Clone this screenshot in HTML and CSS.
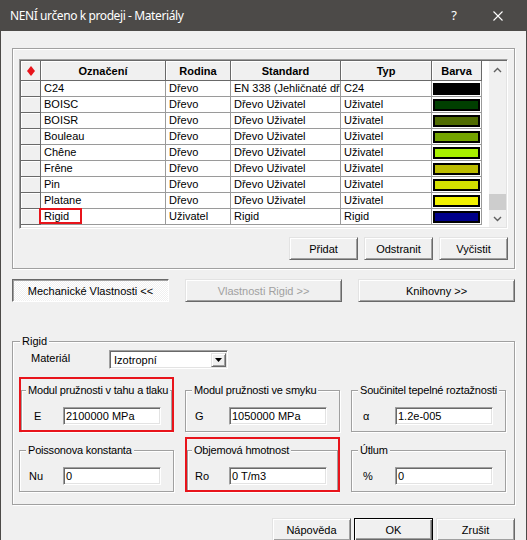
FILE: index.html
```html
<!DOCTYPE html>
<html lang="cs">
<head>
<meta charset="utf-8">
<title>Materiály</title>
<link rel="stylesheet" href="styles.css">
</head>
<body>
<div class="window">
  <div class="titlebar">
    <span class="title">NENÍ určeno k prodeji - Materiály</span>
    <span class="help">?</span>
    <svg class="close" width="10" height="10" viewBox="0 0 10 10"><path d="M0.5 0.5L9.5 9.5M9.5 0.5L0.5 9.5" stroke="#ffffff" stroke-width="1.1" fill="none"/></svg>
  </div>
  <div class="content">
    <div class="group library">
      <div class="grid-frame">
        <table class="grid">
          <colgroup>
            <col class="c-hdr"><col class="c-name"><col class="c-fam"><col class="c-std"><col class="c-typ"><col class="c-col">
          </colgroup>
          <thead>
            <tr>
              <th class="rh"><svg class="diamond" width="8" height="10" viewBox="0 0 8 10"><polygon points="4,0 8,5 4,10 0,5" fill="#e8141b"/></svg></th>
              <th>Označení</th><th>Rodina</th><th>Standard</th><th>Typ</th><th>Barva</th>
            </tr>
          </thead>
          <tbody>
            <tr><td class="rh"></td><td>C24</td><td>Dřevo</td><td>EN 338 (Jehličnaté dřevo)</td><td>C24</td><td class="sw"><span class="swatch" style="background:#000000"></span></td></tr>
            <tr><td class="rh"></td><td>BOISC</td><td>Dřevo</td><td>Dřevo Uživatel</td><td>Uživatel</td><td class="sw"><span class="swatch" style="background:#003f00"></span></td></tr>
            <tr><td class="rh"></td><td>BOISR</td><td>Dřevo</td><td>Dřevo Uživatel</td><td>Uživatel</td><td class="sw"><span class="swatch" style="background:#4f6b00"></span></td></tr>
            <tr><td class="rh"></td><td>Bouleau</td><td>Dřevo</td><td>Dřevo Uživatel</td><td>Uživatel</td><td class="sw"><span class="swatch" style="background:#74a400"></span></td></tr>
            <tr><td class="rh"></td><td>Chêne</td><td>Dřevo</td><td>Dřevo Uživatel</td><td>Uživatel</td><td class="sw"><span class="swatch" style="background:#a8f000"></span></td></tr>
            <tr><td class="rh"></td><td>Frêne</td><td>Dřevo</td><td>Dřevo Uživatel</td><td>Uživatel</td><td class="sw"><span class="swatch" style="background:#bcbc00"></span></td></tr>
            <tr><td class="rh"></td><td>Pin</td><td>Dřevo</td><td>Dřevo Uživatel</td><td>Uživatel</td><td class="sw"><span class="swatch" style="background:#d4e000"></span></td></tr>
            <tr><td class="rh"></td><td>Platane</td><td>Dřevo</td><td>Dřevo Uživatel</td><td>Uživatel</td><td class="sw"><span class="swatch" style="background:#f2f200"></span></td></tr>
            <tr><td class="rh"></td><td class="marked">Rigid<span class="mark"></span></td><td>Uživatel</td><td>Rigid</td><td>Rigid</td><td class="sw"><span class="swatch" style="background:#00008a"></span></td></tr>
          </tbody>
        </table>
        <div class="scrollbar">
          <div class="sb-arrow"><svg width="9" height="6" viewBox="0 0 9 6"><polyline points="1,5 4.5,1.5 8,5" fill="none" stroke="#606060" stroke-width="1.4"/></svg></div>
          <div class="sb-track"><div class="sb-thumb"></div></div>
          <div class="sb-arrow"><svg width="9" height="6" viewBox="0 0 9 6"><polyline points="1,1 4.5,4.5 8,1" fill="none" stroke="#606060" stroke-width="1.4"/></svg></div>
        </div>
      </div>
      <div class="actions">
        <button class="btn act">Přidat</button>
        <button class="btn act">Odstranit</button>
        <button class="btn act">Vyčistit</button>
      </div>
    </div>

    <div class="tabs">
      <button class="btn tab pressed">Mechanické Vlastnosti &lt;&lt;</button>
      <button class="btn tab disabled">Vlastnosti Rigid &gt;&gt;</button>
      <button class="btn tab">Knihovny &gt;&gt;</button>
    </div>

    <fieldset class="rigid">
      <legend>Rigid</legend>
      <div class="mat-row">
        <span class="mat-label">Materiál</span>
        <div class="combo">
          <span class="combo-text">Izotropní</span>
          <span class="combo-btn"><svg width="7" height="4" viewBox="0 0 7 4"><polygon points="0,0 7,0 3.5,4" fill="#000"/></svg></span>
        </div>
      </div>
      <div class="props">
        <div class="prop hl">
          <fieldset class="pf"><legend>Modul pružnosti v tahu a tlaku</legend>
            <div class="pf-row"><span class="pf-label e">E</span><span class="inp">2100000 MPa</span></div>
          </fieldset>
        </div>
        <div class="prop">
          <fieldset class="pf"><legend>Modul pružnosti ve smyku</legend>
            <div class="pf-row"><span class="pf-label">G</span><span class="inp">1050000 MPa</span></div>
          </fieldset>
        </div>
        <div class="prop">
          <fieldset class="pf"><legend>Součinitel tepelné roztažnosti</legend>
            <div class="pf-row"><span class="pf-label a">α</span><span class="inp">1.2e-005</span></div>
          </fieldset>
        </div>
        <div class="prop">
          <fieldset class="pf"><legend>Poissonova konstanta</legend>
            <div class="pf-row"><span class="pf-label">Nu</span><span class="inp">0</span></div>
          </fieldset>
        </div>
        <div class="prop hl">
          <fieldset class="pf"><legend>Objemová hmotnost</legend>
            <div class="pf-row"><span class="pf-label">Ro</span><span class="inp">0 T/m3</span></div>
          </fieldset>
        </div>
        <div class="prop">
          <fieldset class="pf"><legend>Útlum</legend>
            <div class="pf-row"><span class="pf-label a">%</span><span class="inp">0</span></div>
          </fieldset>
        </div>
      </div>
    </fieldset>

    <div class="dialog-buttons">
      <button class="btn dlg">Nápověda</button>
      <button class="btn dlg default">OK</button>
      <button class="btn dlg">Zrušit</button>
    </div>
  </div>
</div>
</body>
</html>
```

FILE: styles.css
```css
* { box-sizing: border-box; }
html, body { margin: 0; padding: 0; }
body {
  width: 527px;
  height: 540px;
  overflow: hidden;
  background: #f0f0f0;
  font-family: "Liberation Sans", Arial, sans-serif;
  font-size: 11px;
  color: #000;
}

.window {
  width: 527px;
  height: 540px;
  border-left: 1px solid #4c4a48;
  border-right: 1px solid #4c4a48;
  background: #f0f0f0;
  overflow: hidden;
}

/* title bar */
.titlebar {
  height: 31px;
  background: #4c4a48;
  color: #ffffff;
  display: flex;
  align-items: center;
  padding: 0 23px 0 9px;
  font-family: "Noto Sans", "Open Sans", sans-serif;
  font-size: 12px;
}
.title { flex: 1; padding-bottom: 1px; letter-spacing: -0.4px; }
.help { font-size: 13px; margin-right: 36px; padding-bottom: 1px; }
.close { display: block; }

.content { padding: 17px 0 0 11px; }

/* generic etched group */
.group {
  width: 503px;
  border: 1px solid #a0a0a0;
  box-shadow: inset 1px 1px 0 #ffffff, 1px 1px 0 #ffffff;
}
.library { padding: 10px 6px 8px; }

/* grid */
.grid-frame {
  height: 170px;
  display: flex;
  justify-content: space-between;
  background: #ffffff;
  border: 1px solid;
  border-color: #a0a0a0 #ffffff #ffffff #a0a0a0;
  box-shadow: inset 1px 1px 0 #696969, inset -1px -1px 0 #e3e3e3;
  padding: 1px;
}
.grid {
  table-layout: fixed;
  width: 461px;
  border-collapse: separate;
  border-spacing: 0;
  align-self: flex-start;
}
.c-hdr { width: 20px; }
.c-name { width: 125px; }
.c-fam { width: 65px; }
.c-std { width: 110px; }
.c-typ { width: 91px; }
.c-col { width: 50px; }

.grid th {
  height: 20px;
  padding: 0;
  background: #f0f0f0;
  font-weight: bold;
  text-align: center;
  border-right: 1px solid #696969;
  border-bottom: 1px solid #696969;
  box-shadow: inset 1px 1px 0 #ffffff;
  line-height: 18px;
  white-space: nowrap;
  overflow: hidden;
}
.grid td {
  height: 16px;
  padding: 0 0 0 3px;
  line-height: 15px;
  border-right: 1px solid #9a9a9a;
  border-bottom: 1px solid #9a9a9a;
  white-space: nowrap;
  overflow: hidden;
  text-overflow: clip;
}
.grid td.rh, .grid th.rh {
  background: #f0f0f0;
  padding: 0;
  border-right: 1px solid #696969;
  border-bottom: 1px solid #696969;
  box-shadow: inset 1px 1px 0 #ffffff;
}
.diamond { display: block; margin: 0 auto; }
.grid td.sw { padding: 0; }
.swatch {
  display: block;
  width: 47px;
  height: 12px;
  margin: 1px 0 0 1px;
  border: 2px solid #000000;
}
.grid td.marked { position: relative; overflow: visible; }
.mark {
  position: absolute;
  left: -2px;
  top: -1px;
  width: 43px;
  bottom: 0;
  border: 2px solid #e8141b;
}

.scrollbar {
  width: 17px;
  background: #f0f0f0;
  display: flex;
  flex-direction: column;
}
.sb-arrow {
  height: 17px;
  display: flex;
  align-items: center;
  justify-content: center;
}
.sb-track {
  flex: 1;
  display: flex;
  flex-direction: column;
  justify-content: flex-end;
}
.sb-thumb { height: 16px; background: #cdcdcd; }

/* buttons */
.btn {
  appearance: none;
  margin: 0;
  padding: 0;
  font: inherit;
  color: #000;
  height: 23px;
  background: #f0f0f0;
  border: 1px solid;
  border-color: #e3e3e3 #696969 #696969 #e3e3e3;
  box-shadow: inset 1px 1px 0 #ffffff, inset -1px -1px 0 #a0a0a0;
  text-align: center;
  white-space: nowrap;
}
.actions {
  display: flex;
  justify-content: flex-end;
  gap: 6px;
  margin-top: 8px;
}
.act { width: 69px; }

.tabs {
  width: 503px;
  display: flex;
  justify-content: space-between;
  margin-top: 10px;
}
.tab { width: 157px; }
.tab.pressed {
  border-color: #696969 #ffffff #ffffff #696969;
  box-shadow: inset 1px 1px 0 #a0a0a0;
  background-color: #f0f0f0;
  background-image: conic-gradient(#ffffff 25%, #f0f0f0 0 50%, #ffffff 0 75%, #f0f0f0 0);
  background-size: 2px 2px;
}
.tab.disabled { color: #a0a0a0; }

/* Rigid section */
fieldset {
  margin: 0;
  min-width: 0;
  border: 1px solid #a0a0a0;
  box-shadow: inset 1px 1px 0 #ffffff, 1px 1px 0 #ffffff;
}
legend {
  padding: 0 2px;
  line-height: 14px;
  background: #f0f0f0;
  white-space: nowrap;
}
.rigid {
  width: 503px;
  margin-top: 32px;
  padding: 2px 6px 12px;
}
.rigid > legend { margin-left: 1px; }

.mat-row {
  display: flex;
  align-items: center;
  height: 19px;
}
.mat-label { width: 90px; padding-left: 12px; padding-bottom: 3px; }
.combo {
  display: flex;
  width: 119px;
  height: 19px;
  background: #ffffff;
  border: 1px solid;
  border-color: #a0a0a0 #ffffff #ffffff #a0a0a0;
  box-shadow: inset 1px 1px 0 #696969, inset -1px -1px 0 #e3e3e3;
  padding: 2px 1px 1px 2px;
}
.combo-text { flex: 1; line-height: 14px; padding-left: 2px; }
.combo-btn {
  width: 15px;
  display: flex;
  align-items: center;
  justify-content: center;
  background: #f0f0f0;
  border: 1px solid;
  border-color: #e3e3e3 #696969 #696969 #e3e3e3;
  box-shadow: inset 1px 1px 0 #ffffff, inset -1px -1px 0 #a0a0a0;
}

.props {
  display: grid;
  grid-template-columns: repeat(3, 155px);
  column-gap: 11px;
  row-gap: 11px;
  margin-top: 14px;
}
.prop { position: relative; }
.pf { padding: 10px 6px 6px 9px; }
.pf > legend { margin-left: -3px; letter-spacing: -0.2px; }
.prop.hl .pf { margin: 0 2px; padding-left: 7px; }
.prop.hl .pf > legend { margin-left: -3px; }
.prop.hl::after {
  content: "";
  position: absolute;
  left: 0;
  right: 0;
  top: -6px;
  bottom: 0;
  border: 2px solid #e8141b;
  pointer-events: none;
}
.pf-row { display: flex; align-items: center; height: 18px; }
.pf-label { width: 34px; }
.pf-label.e { padding-left: 5px; }
.pf-label.a { padding-left: 2px; }
.inp {
  width: 98px;
  height: 18px;
  background: #ffffff;
  border: 1px solid;
  border-color: #a0a0a0 #ffffff #ffffff #a0a0a0;
  box-shadow: inset 1px 1px 0 #696969, inset -1px -1px 0 #e3e3e3;
  padding: 1px 0 0 2px;
  line-height: 14px;
  white-space: nowrap;
}

.dialog-buttons {
  width: 503px;
  display: flex;
  justify-content: flex-end;
  gap: 3px;
  margin-top: 13px;
}
.dlg { width: 79px; }
.dlg.default {
  border: 1px solid #000000;
  box-shadow: inset 1px 1px 0 #ffffff, inset -1px -1px 0 #696969, inset -2px -2px 0 #a0a0a0;
}
```
